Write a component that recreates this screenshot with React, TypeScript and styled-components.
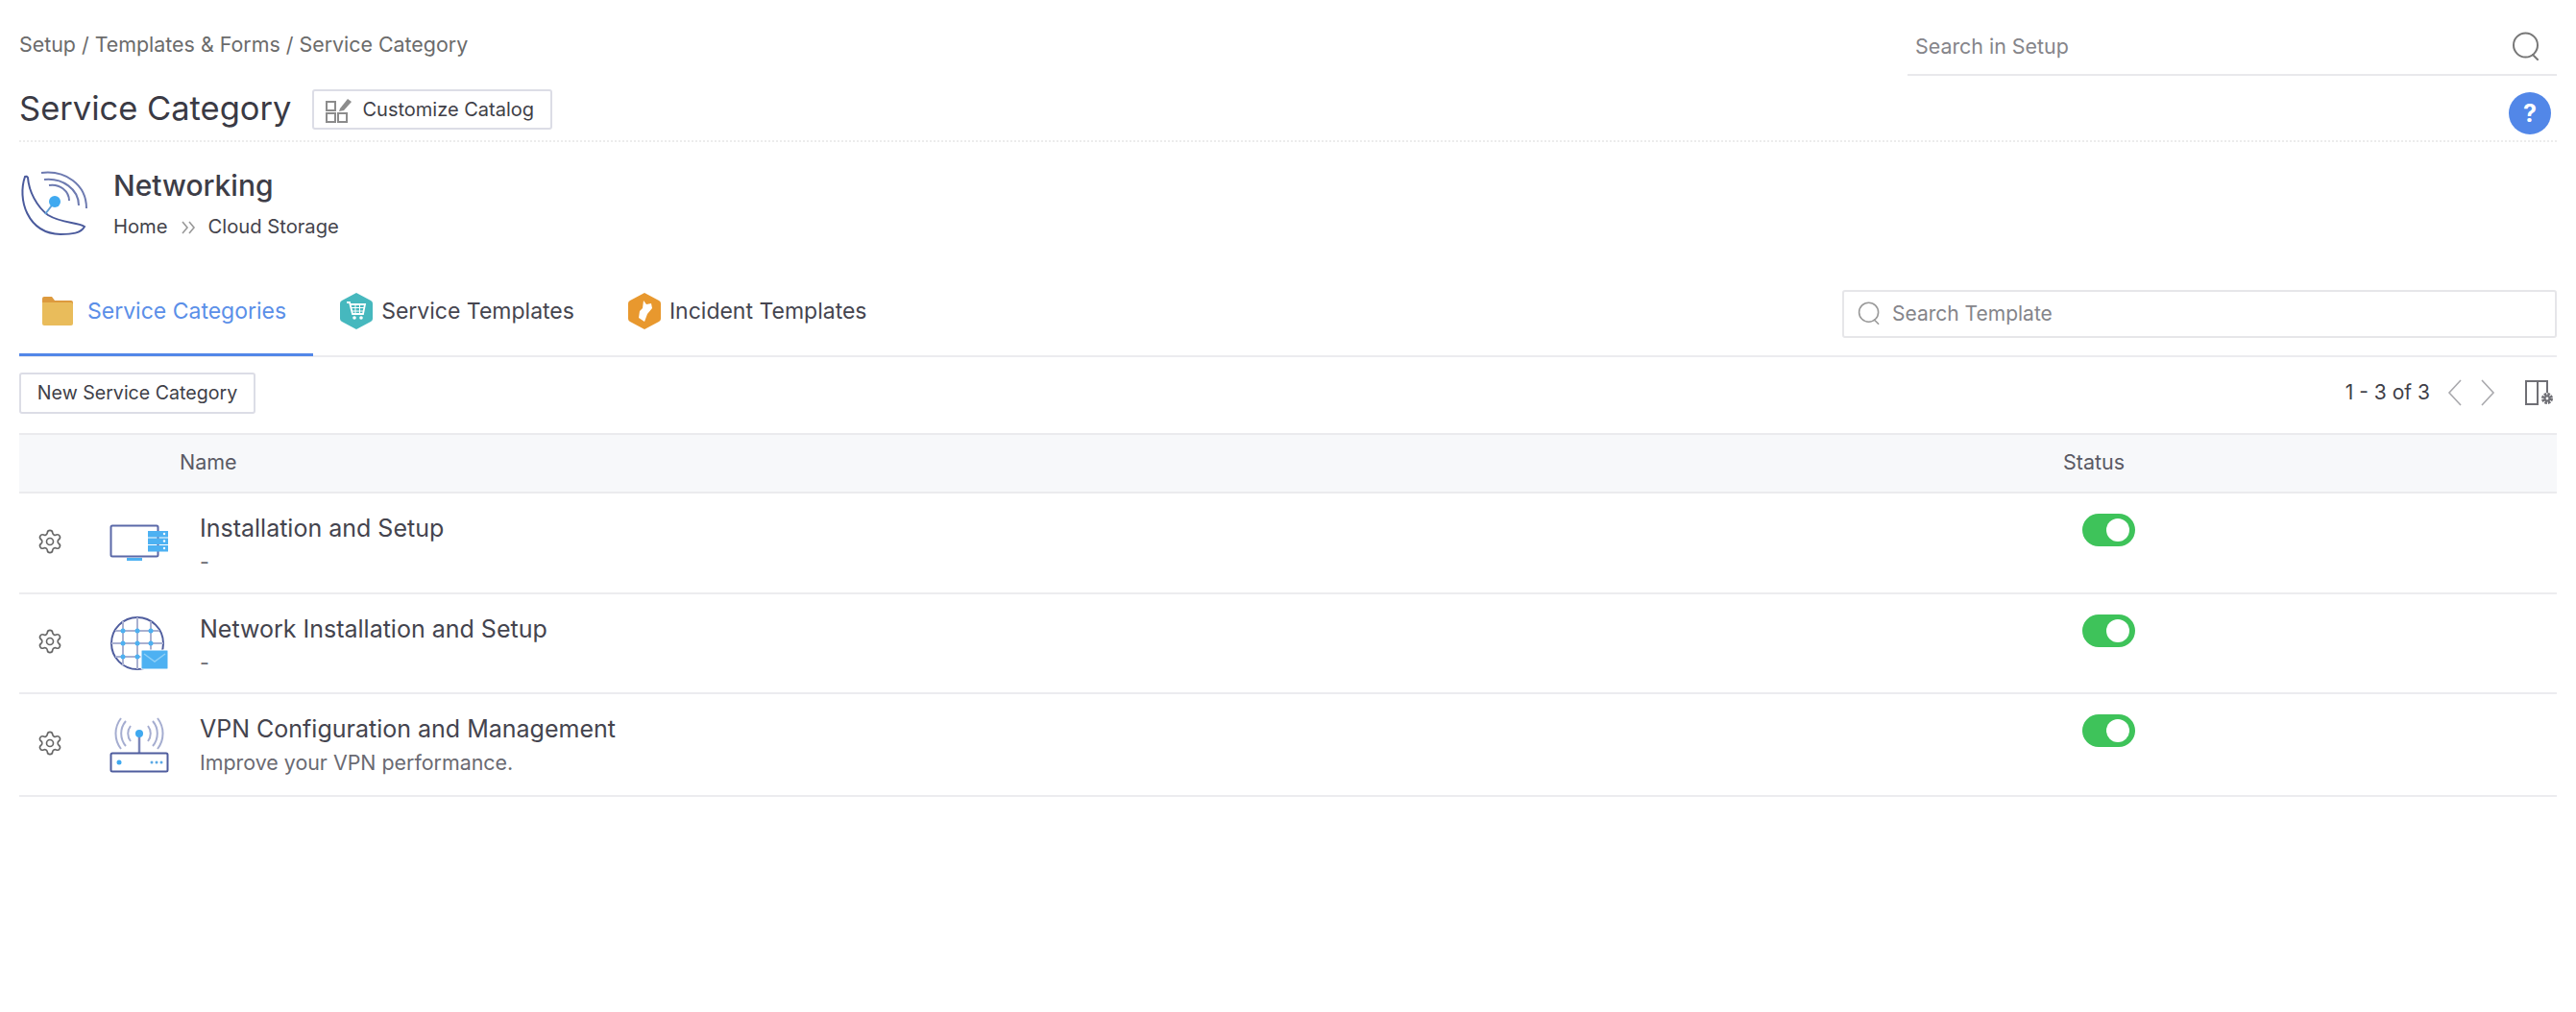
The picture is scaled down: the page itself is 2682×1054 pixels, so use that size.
import React from "react";
import styled, { createGlobalStyle } from "styled-components";
import { Settings } from "lucide-react";

const Global = createGlobalStyle`
  html, body { margin: 0; padding: 0; background: #fff; }
  body { font-family: Inter, "Noto Sans", sans-serif; color: #444; }
  * { box-sizing: border-box; }
`;

const Page = styled.div`
  width: 2682px;
  height: 1054px;
  padding: 0 20px;
  overflow: hidden;
`;

const TopBar = styled.div`
  display: flex;
  justify-content: space-between;
  height: 79px;
`;
const Crumbs = styled.div`
  font-size: 21.4px;
  line-height: 28px;
  color: #6b6b6b;
  padding-top: 32px;
`;
const SetupSearch = styled.div`
  width: 676px;
  height: 79px;
  border-bottom: 2px solid #e9e9ec;
  display: flex;
  align-items: center;
  justify-content: space-between;
  padding: 18px 17px 0 8px;
  font-size: 21.4px;
  color: #85858a;
`;

const TitleRow = styled.div`
  height: 69px;
  display: flex;
  align-items: center;
  border-bottom: 2px dotted #ececec;
`;
const Title = styled.h1`
  margin: 0;
  font-size: 34.5px;
  font-weight: 400;
  color: #3a3a44;
`;
const OutlineButton = styled.div`
  height: 42px;
  display: inline-flex;
  align-items: center;
  background: #fff;
  border: 2px solid #dcdde6;
  border-radius: 3px;
  font-size: 20px;
  color: #3f3f48;
  white-space: nowrap;
`;
const CustomizeButton = styled(OutlineButton)`
  width: 250px;
  margin-left: 22px;
  margin-top: 2px;
  padding-left: 12px;
  gap: 10px;
`;
const HelpBadge = styled.div`
  width: 44px;
  height: 44px;
  margin-left: auto;
  margin-right: 6px;
  margin-top: 10px;
  border-radius: 50%;
  background: #5287e8;
  color: #fff;
  font-weight: 700;
  font-size: 25px;
  display: flex;
  align-items: center;
  justify-content: center;
`;

const CategoryHead = styled.div`
  height: 130px;
  padding-top: 29px;
  display: flex;
  align-items: flex-start;
  gap: 27px;
`;
const CategoryText = styled.div`
  display: flex;
  flex-direction: column;
  margin-top: -2px;
  margin-left: -1px;
`;
const CategoryName = styled.div`
  font-size: 30px;
  line-height: 36px;
  font-weight: 500;
  color: #3d3d47;
`;
const CategoryPath = styled.div`
  margin-top: 11px;
  display: flex;
  align-items: center;
  font-size: 20.2px;
  line-height: 28px;
  color: #44444c;
`;
const PathSep = styled.span`
  margin: 2px 13px 0 13px;
  display: inline-flex;
  color: #999;
`;

const TabBar = styled.div`
  height: 94px;
  display: flex;
  align-items: stretch;
  border-bottom: 2px solid #ececef;
`;
const Tab = styled.div<{ $active?: boolean }>`
  display: flex;
  align-items: center;
  gap: 9px;
  padding: 2px 28px 0;
  font-size: 23px;
  color: ${(p) => (p.$active ? "#5b8fe8" : "#45454f")};
  margin-bottom: -1px;
  border-bottom: 3px solid ${(p) => (p.$active ? "#5287e8" : "transparent")};
  &:first-child { padding-left: 24px; gap: 15px; }
`;
const TemplateSearch = styled.div`
  width: 744px;
  height: 50px;
  margin: 24px 0 0 auto;
  border: 2px solid #e6e6e9;
  border-radius: 3px;
  display: flex;
  align-items: center;
  gap: 12px;
  padding: 0 0 2px 14px;
  font-size: 21px;
  color: #85858a;
`;

const Toolbar = styled.div`
  height: 79px;
  display: flex;
  align-items: center;
  justify-content: space-between;
`;
const NewButton = styled(OutlineButton)`
  width: 246px;
  height: 43px;
  justify-content: center;
  margin-top: -4px;
  font-size: 19.6px;
  padding-bottom: 2px;
`;
const Pager = styled.div`
  display: flex;
  align-items: center;
  font-size: 21px;
  color: #3f3f48;
  margin-top: -6px;
`;
const PagerArrow = styled.span`
  display: inline-flex;
  margin-left: 18px;
`;
const ColumnsIcon = styled.span`
  display: inline-flex;
  margin-left: 30px;
  margin-right: 2px;
`;

const HeaderRow = styled.div`
  height: 63px;
  display: grid;
  grid-template-columns: 167px 1961px 1fr;
  align-items: center;
  background: #f7f8fa;
  border-top: 2px solid #ebebee;
  border-bottom: 2px solid #ebebee;
  font-size: 21.5px;
  color: #5a5a64;
  padding-bottom: 4px;
`;
const Row = styled.div<{ $height: number }>`
  height: ${(p) => p.$height}px;
  display: grid;
  grid-template-columns: 94px 94px 1960px 1fr;
  border-bottom: 2px solid #ececef;
`;
const GearCell = styled.div`
  display: flex;
  align-items: center;
  padding: 0 0 4px 18px;
  color: #666;
`;
const IconCell = styled.div`
  display: flex;
  align-items: center;
  justify-content: flex-start;
`;
const TextCell = styled.div`
  padding-top: 21px;
`;
const RowTitle = styled.div`
  font-size: 25px;
  line-height: 30px;
  color: #44444e;
`;
const RowDesc = styled.div`
  margin-top: 6px;
  font-size: 21.4px;
  line-height: 28px;
  color: #6a6a72;
`;
const StatusCell = styled.div`
  padding-top: 21px;
`;
const Toggle = styled.div`
  width: 55px;
  height: 34px;
  border-radius: 17px;
  background: #3ec35a;
  display: flex;
  align-items: center;
  justify-content: flex-end;
  padding-right: 6px;
`;
const Knob = styled.div`
  width: 24px;
  height: 24px;
  border-radius: 50%;
  background: #fff;
`;

const SearchGlyph = ({ size = 30, color = "#777" }: { size?: number; color?: string }) => (
  <svg width={size} height={size} viewBox="0 0 30 30" fill="none" stroke={color} strokeWidth="2">
    <circle cx="14.5" cy="14" r="12.5" />
    <path d="M22 24l5 5" strokeLinecap="round" />
  </svg>
);

const CustomizeGlyph = () => (
  <svg width="28" height="28" viewBox="0 0 28 28" fill="none" stroke="#8c8c8c" strokeWidth="2">
    <rect x="1" y="6" width="9" height="9" />
    <rect x="1" y="18" width="9" height="9" />
    <rect x="13" y="18" width="9" height="9" />
    <path d="M15 13l8-10 4 3-8 9-5 1z" fill="#8c8c8c" stroke="none" />
  </svg>
);

const DishGlyph = () => (
  <svg width="72" height="70" viewBox="0 0 72 70" fill="none" stroke="#4a5a9c" strokeWidth="2">
    <path d="M6 7C-2 30 8 66 43 67C55 67 64 66 68 59C60 54 45 56 30 47C18 38 10 22 9 8Q8 6 6 7Z" />
    <path d="M23 3C48 0 70 15 70 40M26 10C45 8 62 20 62 37M31 16C42 14 52 22 52 32" stroke="#6d7ab0" />
    <path d="M37 33L27 46" stroke="#5f9fd6" />
    <circle cx="37" cy="33" r="6" fill="#3fa9f0" stroke="none" />
  </svg>
);

const MonitorGlyph = () => (
  <svg width="62" height="40" viewBox="0 0 62 40" fill="none">
    <rect x="1.5" y="1.5" width="49" height="32" rx="1.5" fill="#fff" stroke="#5a68a8" strokeWidth="2" />
    <rect x="18" y="35" width="16" height="3" fill="#4db1f2" />
    <rect x="40" y="7" width="21" height="6.5" fill="#4db1f2" />
    <rect x="40" y="14.5" width="21" height="6.5" fill="#4db1f2" />
    <rect x="40" y="22" width="21" height="6.5" fill="#4db1f2" />
    <circle cx="57" cy="10" r="1.2" fill="#fff" />
    <circle cx="57" cy="17.5" r="1.2" fill="#fff" />
    <circle cx="57" cy="25" r="1.2" fill="#fff" />
  </svg>
);

const GlobeGlyph = () => {
  const xs = [14, 29, 43];
  const ys = [17, 30, 44];
  return (
    <svg width="62" height="60" viewBox="0 0 62 60" fill="none">
      <circle cx="29" cy="30" r="27" stroke="#4f5d9e" strokeWidth="2" />
      {xs.map((x) => (
        <path key={x} d={`M${x} ${x === 29 ? 3 : 7}V${x === 29 ? 57 : 53}`} stroke="#a9b0d0" strokeWidth="2" />
      ))}
      {ys.map((y) => (
        <path key={y} d={`M${y === 30 ? 2 : 6} ${y}H${y === 30 ? 56 : 52}`} stroke="#a9b0d0" strokeWidth="2" />
      ))}
      {xs.map((x) => ys.map((y) => <circle key={`${x}-${y}`} cx={x} cy={y} r="2.5" fill="#4db1f2" />))}
      <rect x="33" y="37" width="28" height="20" rx="1" fill="#4db1f2" stroke="#fff" strokeWidth="1" />
      <path d="M36 41l11 8 11-8" stroke="#8fd0f7" strokeWidth="1.5" />
    </svg>
  );
};

const RouterGlyph = () => (
  <svg width="62" height="60" viewBox="0 0 62 60" fill="none">
    <path d="M31 18V38" stroke="#7c87b8" strokeWidth="2.5" />
    <circle cx="31" cy="18" r="4" fill="#3fa9f0" />
    <g stroke="#a5add0" strokeWidth="2">
      <path d="M22 10a13 13 0 0 0 0 16M40 10a13 13 0 0 1 0 16" />
      <path d="M17 5a20 20 0 0 0 0 26M45 5a20 20 0 0 1 0 26" />
      <path d="M12 2a26 26 0 0 0 0 32M50 2a26 26 0 0 1 0 32" />
    </g>
    <rect x="1.5" y="38.5" width="59" height="19" rx="1.5" fill="#fff" stroke="#4f5d9e" strokeWidth="2" />
    <circle cx="10" cy="48" r="2.5" fill="#3fa9f0" />
    <circle cx="44" cy="48" r="1.5" fill="#5aa9e6" />
    <circle cx="49" cy="48" r="1.5" fill="#5aa9e6" />
    <circle cx="54" cy="48" r="1.5" fill="#5aa9e6" />
  </svg>
);

const FolderGlyph = () => (
  <svg width="32" height="30" viewBox="0 0 32 30">
    <path d="M0 2q0-2 2-2h8l3 4h17q2 0 2 2v2H0z" fill="#dd9a3e" />
    <path d="M0 6h30q2 0 2 2v20q0 2-2 2H2q-2 0-2-2z" fill="#e9bc5b" />
  </svg>
);

const CartHex = () => (
  <svg width="34" height="38" viewBox="0 0 34 38">
    <path d="M17 0l15 8q2 1 2 3v16q0 2-2 3l-15 8-15-8q-2-1-2-3V11q0-2 2-3z" fill="#46b8be" />
    <path d="M7 10h3l3 12h11l2-10H11" fill="none" stroke="#fff" strokeWidth="1.8" />
    <path d="M12 15.5h13M13 19h11M16 12v10M20.5 12v10" stroke="#fff" strokeWidth="1" />
    <circle cx="15" cy="26" r="1.8" fill="#fff" />
    <circle cx="22" cy="26" r="1.8" fill="#fff" />
  </svg>
);

const TicketHex = () => (
  <svg width="34" height="38" viewBox="0 0 34 38">
    <path d="M17 0l15 8q2 1 2 3v16q0 2-2 3l-15 8-15-8q-2-1-2-3V11q0-2 2-3z" fill="#e8982e" />
    <path d="M16 8l3 4 5-1 1 5-5 6-3 8-6-4 1-7 3-3z" fill="#fff" />
  </svg>
);

const Chevron = ({ left }: { left?: boolean }) => (
  <svg width="16" height="30" viewBox="0 0 16 30" fill="none" stroke="#a9a9ad" strokeWidth="1.6">
    <path d={left ? "M14 2L2 15l12 13" : "M2 2l12 13L2 28"} />
  </svg>
);

const ColumnsGlyph = () => (
  <svg width="32" height="28" viewBox="0 0 32 28" fill="none">
    <path d="M24 14V2H2v24h12V2M14 2h10" stroke="#6f6f75" strokeWidth="2" />
    <path d="M14 26H2" stroke="#6f6f75" strokeWidth="2" />
    <circle cx="24" cy="20" r="4.5" fill="none" stroke="#6f6f75" strokeWidth="3" strokeDasharray="2.5 1" />
    <circle cx="24" cy="20" r="3.5" fill="#6f6f75" />
    <circle cx="24" cy="20" r="1.4" fill="#fff" />
  </svg>
);

const rows = [
  { title: "Installation and Setup", desc: "-", icon: <MonitorGlyph />, height: 105 },
  { title: "Network Installation and Setup", desc: "-", icon: <GlobeGlyph />, height: 104 },
  { title: "VPN Configuration and Management", desc: "Improve your VPN performance.", icon: <RouterGlyph />, height: 107 },
];

export default function App() {
  return (
    <Page>
      <Global />
      <TopBar>
        <Crumbs>Setup / Templates &amp; Forms / Service Category</Crumbs>
        <SetupSearch>
          Search in Setup
          <SearchGlyph />
        </SetupSearch>
      </TopBar>
      <TitleRow>
        <Title>Service Category</Title>
        <CustomizeButton>
          <CustomizeGlyph />
          Customize Catalog
        </CustomizeButton>
        <HelpBadge>?</HelpBadge>
      </TitleRow>
      <CategoryHead>
        <DishGlyph />
        <CategoryText>
          <CategoryName>Networking</CategoryName>
          <CategoryPath>
            Home
            <PathSep>
              <svg width="16" height="14" viewBox="0 0 16 14" fill="none" stroke="#999" strokeWidth="1.6">
                <path d="M2 1l5 6-5 6M9 1l5 6-5 6" />
              </svg>
            </PathSep>
            Cloud Storage
          </CategoryPath>
        </CategoryText>
      </CategoryHead>
      <TabBar>
        <Tab $active>
          <FolderGlyph />
          Service Categories
        </Tab>
        <Tab>
          <CartHex />
          Service Templates
        </Tab>
        <Tab>
          <TicketHex />
          Incident Templates
        </Tab>
        <TemplateSearch>
          <SearchGlyph size={24} color="#999" />
          Search Template
        </TemplateSearch>
      </TabBar>
      <Toolbar>
        <NewButton>New Service Category</NewButton>
        <Pager>
          1 - 3 of 3
          <PagerArrow>
            <Chevron left />
          </PagerArrow>
          <PagerArrow>
            <Chevron />
          </PagerArrow>
          <ColumnsIcon>
            <ColumnsGlyph />
          </ColumnsIcon>
        </Pager>
      </Toolbar>
      <HeaderRow>
        <span />
        <span>Name</span>
        <span>Status</span>
      </HeaderRow>
      {rows.map((r) => (
        <Row key={r.title} $height={r.height}>
          <GearCell>
            <Settings size={28} strokeWidth={1.4} />
          </GearCell>
          <IconCell>{r.icon}</IconCell>
          <TextCell>
            <RowTitle>{r.title}</RowTitle>
            <RowDesc>{r.desc}</RowDesc>
          </TextCell>
          <StatusCell>
            <Toggle>
              <Knob />
            </Toggle>
          </StatusCell>
        </Row>
      ))}
    </Page>
  );
}
